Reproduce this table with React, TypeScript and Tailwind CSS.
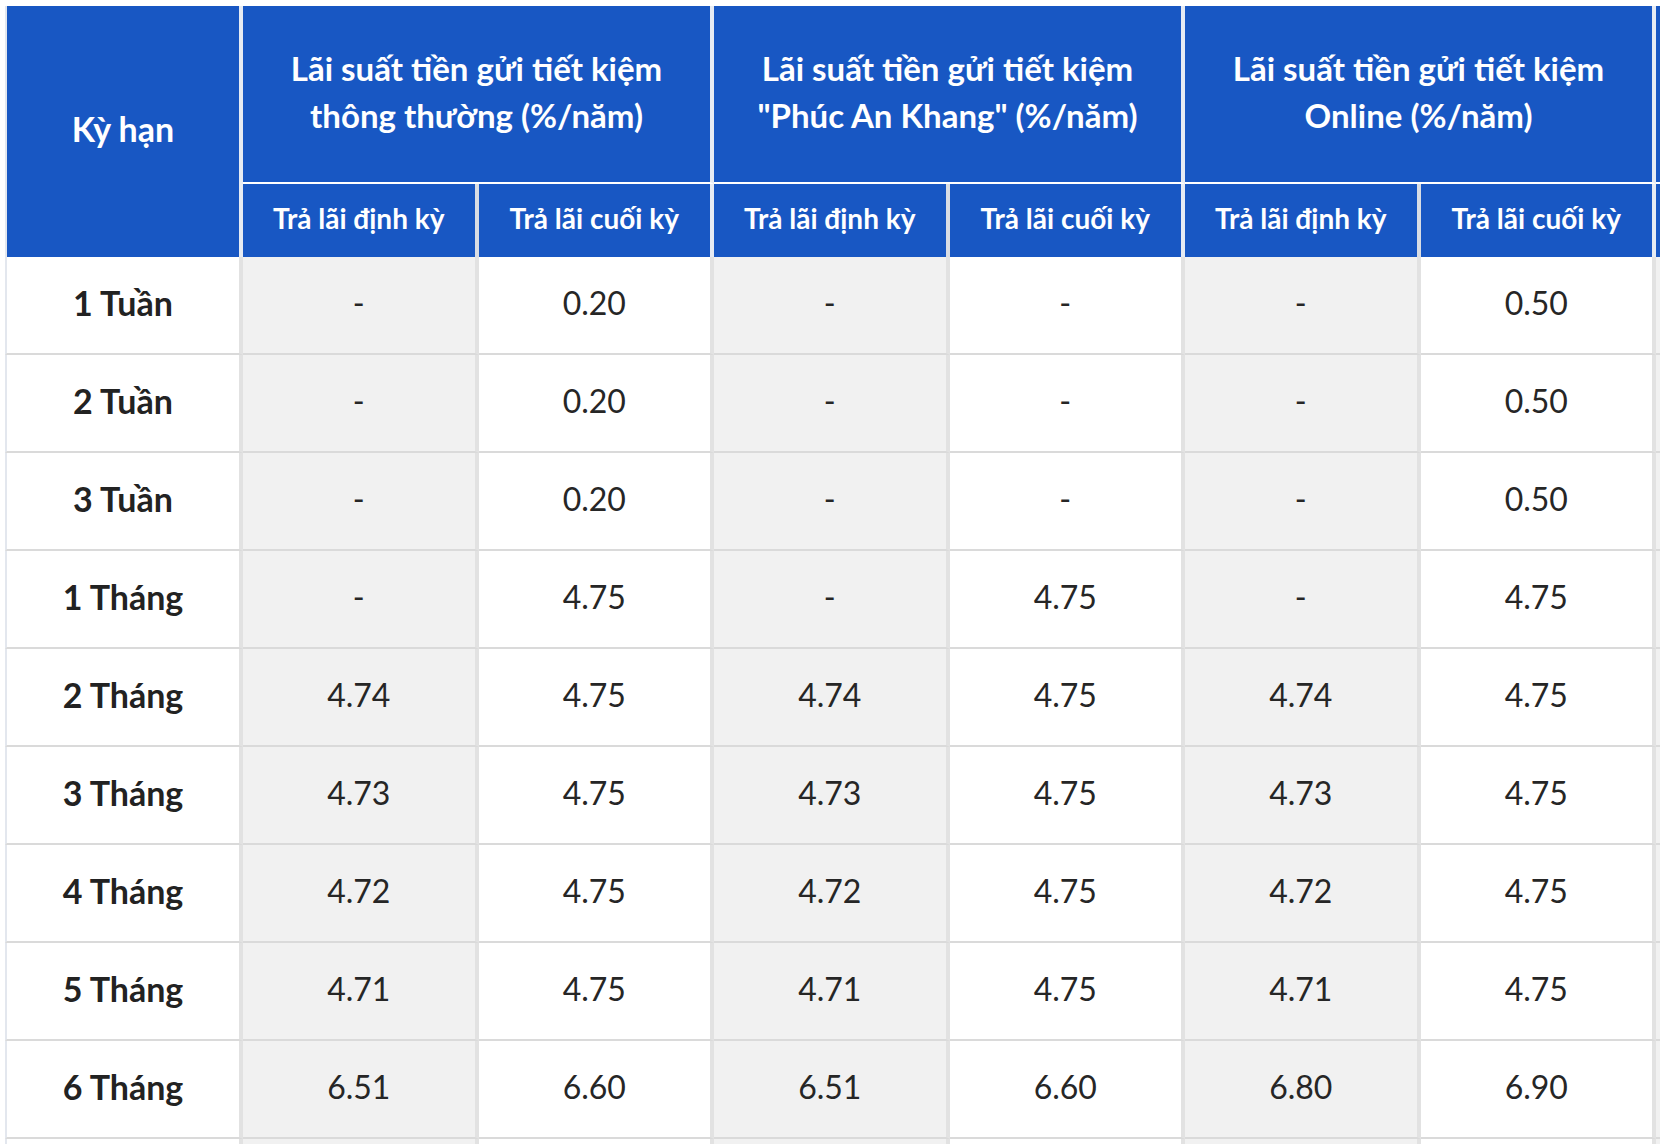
// ─── Data ─────────────────────────────────────────────────────────────────────

const groups = [
  ["Lãi suất tiền gửi tiết kiệm", "thông thường (%/năm)"],
  ["Lãi suất tiền gửi tiết kiệm", "\"Phúc An Khang\" (%/năm)"],
  ["Lãi suất tiền gửi tiết kiệm", "Online (%/năm)"],
];

const rows: string[][] = [
  ["1 Tuần", "-", "0.20", "-", "-", "-", "0.50"],
  ["2 Tuần", "-", "0.20", "-", "-", "-", "0.50"],
  ["3 Tuần", "-", "0.20", "-", "-", "-", "0.50"],
  ["1 Tháng", "-", "4.75", "-", "4.75", "-", "4.75"],
  ["2 Tháng", "4.74", "4.75", "4.74", "4.75", "4.74", "4.75"],
  ["3 Tháng", "4.73", "4.75", "4.73", "4.75", "4.73", "4.75"],
  ["4 Tháng", "4.72", "4.75", "4.72", "4.75", "4.72", "4.75"],
  ["5 Tháng", "4.71", "4.75", "4.71", "4.75", "4.71", "4.75"],
  ["6 Tháng", "6.51", "6.60", "6.51", "6.60", "6.80", "6.90"],
];

const headBlue = "bg-[#1857c3] text-center align-middle font-bold text-white";
const bodyCell = "border-b-2 border-r-4 border-b-[#dadada] border-r-[#e2e2e2] text-center";

// ─── Component ────────────────────────────────────────────────────────────────

export default function App() {
  return (
    <div className="h-[1144px] w-[1660px] overflow-hidden bg-white pl-[5px] pt-[6px] font-[Lato,sans-serif]">
      <table className="w-[2122px] table-fixed border-separate border-spacing-0">
        <colgroup>
          <col className="w-[238px]" />
          {Array.from({ length: 8 }).map((_, i) => (
            <col key={i} className="w-[235.5px]" />
          ))}
        </colgroup>
        <thead>
          {/* ── Group headers ─────────────────────────────────────────── */}
          <tr className="h-[178px]">
            <th
              rowSpan={2}
              className={`border-l-2 border-r-4 border-l-[#e3e7ee] border-r-[#e6ebf3] pb-[6px] text-[34px] ${headBlue}`}
            >
              Kỳ hạn
            </th>
            {groups.map((g, i) => (
              <th
                key={i}
                colSpan={2}
                className={`border-b-2 border-r-4 border-b-white border-r-[#e6ebf3] px-1 pb-[5px] text-[33px] leading-[47px] ${headBlue}`}
              >
                {g[0]}
                <br />
                {g[1]}
              </th>
            ))}
            {/* next group, cut off by the viewport */}
            <th colSpan={2} className={`border-b-2 border-b-white ${headBlue}`} />
          </tr>
          {/* ── Sub headers ───────────────────────────────────────────── */}
          <tr className="h-[73px]">
            {groups.map((_, i) => [
              <th
                key={`a${i}`}
                className={`border-r-4 border-r-[#d9dde4] pb-[5px] text-[28px] ${headBlue}`}
              >
                Trả lãi định kỳ
              </th>,
              <th
                key={`b${i}`}
                className={`border-r-4 border-r-[#e6ebf3] pb-[5px] text-[28px] ${headBlue}`}
              >
                Trả lãi cuối kỳ
              </th>,
            ])}
            <th className={`border-r-4 border-r-[#d9dde4] ${headBlue}`} />
            <th className={headBlue} />
          </tr>
        </thead>
        <tbody>
          {rows.map((r) => (
            <tr key={r[0]} className="h-[98px]">
              <td
                className={`border-l-2 border-l-[#e3e7ee] bg-white pb-[5px] text-[34px] font-bold text-[#222] ${bodyCell}`}
              >
                {r[0]}
              </td>
              {r.slice(1).map((v, j) => (
                <td
                  key={j}
                  className={`${j % 2 === 0 ? "bg-[#f1f1f1]" : "bg-white"} pb-[4px] text-[32px] text-[#262626] ${bodyCell}`}
                >
                  {v}
                </td>
              ))}
              <td className={`bg-[#f1f1f1] ${bodyCell}`} />
              <td className={`bg-white ${bodyCell}`} />
            </tr>
          ))}
          {/* next row, cut off by the viewport */}
          <tr className="h-[98px]">
            <td className={`border-l-2 border-l-[#e3e7ee] bg-white ${bodyCell}`} />
            {Array.from({ length: 8 }).map((_, j) => (
              <td
                key={j}
                className={`${j % 2 === 0 ? "bg-[#f1f1f1]" : "bg-white"} ${bodyCell}`}
              />
            ))}
          </tr>
        </tbody>
      </table>
    </div>
  );
}
